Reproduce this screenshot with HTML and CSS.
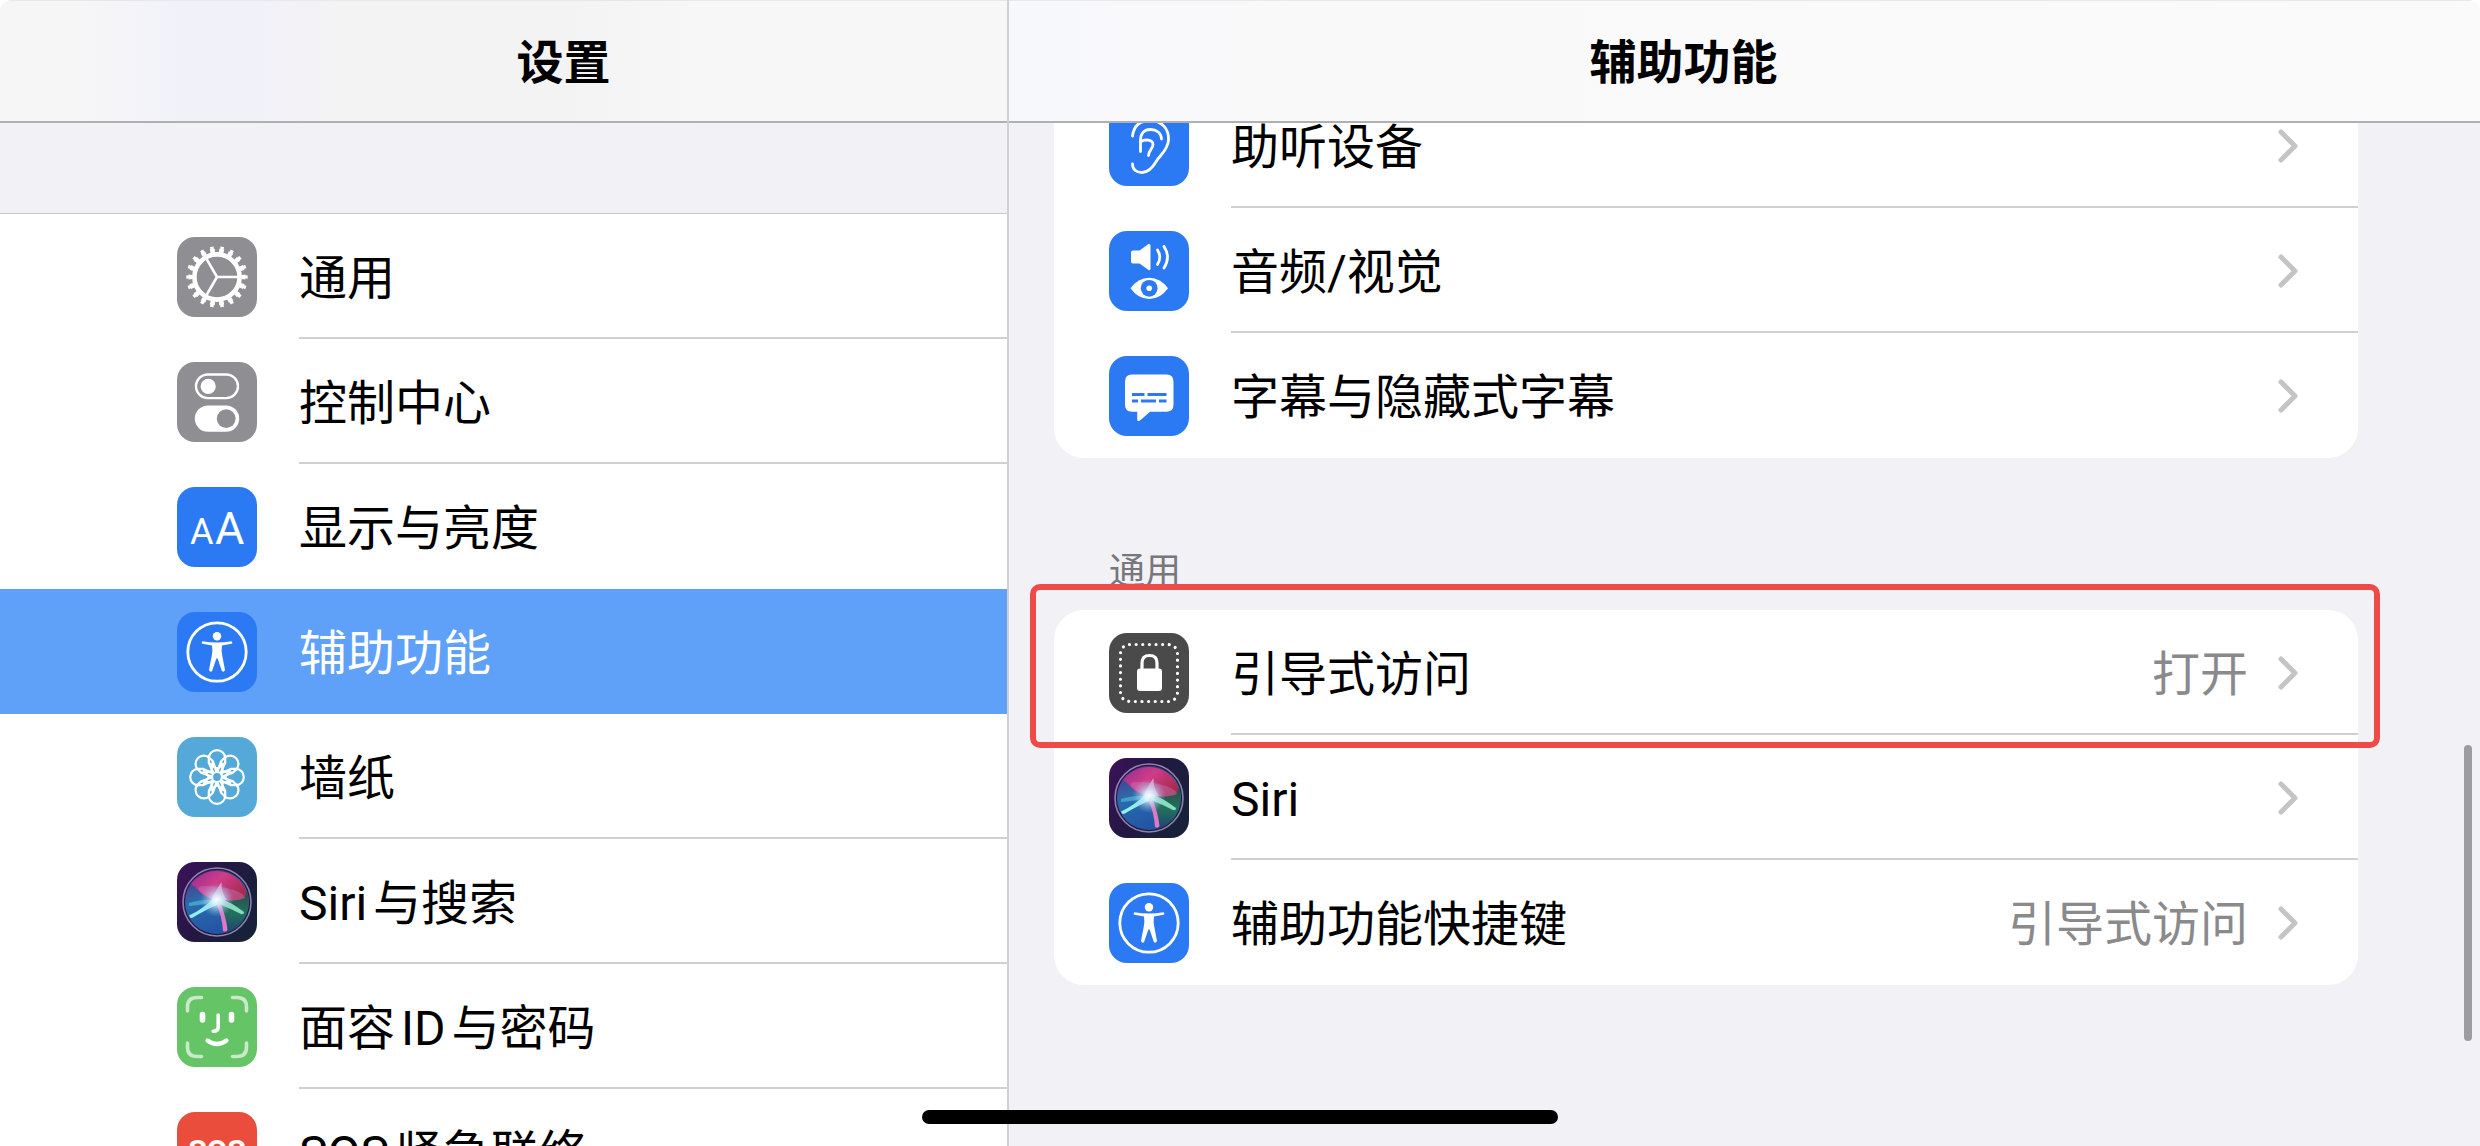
FILE: index.html
```
<!DOCTYPE html>
<html lang="zh-CN">
<head>
    <meta charset="UTF-8">
    <meta name="viewport" content="width=device-width, initial-scale=1.0">
    <title>设置</title>
    <link rel="stylesheet" href="styles.css">
</head>
<body>
    <!-- Icons that are used more than once -->
    <svg class="defs" aria-hidden="true">
        <defs>
            <linearGradient id="siriBg" x1="0" y1="0" x2="1" y2="0.5">
                <stop offset="0" stop-color="#3d125c"/>
                <stop offset="0.5" stop-color="#241743"/>
                <stop offset="1" stop-color="#17213a"/>
            </linearGradient>
            <linearGradient id="siriBlue" x1="0" y1="0" x2="0.3" y2="1">
                <stop offset="0" stop-color="#5a2580"/>
                <stop offset="0.5" stop-color="#2a6cab"/>
                <stop offset="1" stop-color="#2355a5"/>
            </linearGradient>
            <linearGradient id="siriGreen" x1="0" y1="0" x2="0" y2="1">
                <stop offset="0" stop-color="#2c4a4c"/>
                <stop offset="0.5" stop-color="#23705c"/>
                <stop offset="1" stop-color="#1f4373"/>
            </linearGradient>
            <linearGradient id="siriPink" x1="0" y1="0" x2="1" y2="0.6">
                <stop offset="0" stop-color="#8f2d92"/>
                <stop offset="0.5" stop-color="#cf3c88"/>
                <stop offset="1" stop-color="#a82b50"/>
            </linearGradient>
            <radialGradient id="siriGlow">
                <stop offset="0" stop-color="#ffffff"/>
                <stop offset="0.3" stop-color="#d9f4ff" stop-opacity="0.8"/>
                <stop offset="1" stop-color="#8fb4e8" stop-opacity="0"/>
            </radialGradient>
        </defs>
        <symbol id="icon-siri" viewBox="0 0 80 80">
            <rect width="80" height="80" fill="url(#siriBg)"/>
            <circle cx="40" cy="40" r="32" fill="url(#siriBlue)"/>
            <path d="M40 38L70 30A32 32 0 0 1 48 71Z" fill="url(#siriGreen)"/>
            <path d="M14 22A32 32 0 0 1 69 28Q70 35 64 37Q52 40 40 38Q28 36 22 29Q18 24 14 22Z" fill="url(#siriPink)"/>
            <path d="M22 28Q20 24 28 24Q44 24 57 28Q68 32 68 36Q60 40 40 38Q27 35 22 28Z" fill="#c98acb" opacity="0.35"/>
            <path d="M34 38Q39 28 44.500 20Q44 30 50 38Z" fill="#eebbe6" opacity="0.75"/>
            <path d="M12 41Q28 36 40 39Q28 43 12 44Z" fill="#54c4dc" opacity="0.6"/>
            <path d="M37 36Q26 47 12 53.500Q13 56.500 15 56Q30 47 42 42Z" fill="#8ff1ee"/>
            <path d="M42 36Q54 40 67 50Q67 53 64 52Q52 46 42 42Z" fill="#8febc8" opacity="0.9"/>
            <path d="M39 41Q45 54 46 69Q49 71 50.500 68Q49 54 43 40Z" fill="#df78c6"/>
            <circle cx="40" cy="38" r="17" fill="url(#siriGlow)"/>
            <circle cx="40" cy="40" r="34" fill="none" stroke="#b5a5cf" stroke-opacity="0.75" stroke-width="1.6"/>
        </symbol>
        <symbol id="icon-access" viewBox="0 0 80 80">
            <rect width="80" height="80" fill="#2b7af4"/>
            <circle cx="40" cy="40" r="29.2" fill="none" stroke="#fff" stroke-width="2.8"/>
            <circle cx="40" cy="24.3" r="4.2" fill="#fff"/>
            <path d="M25.4 29.2Q40 32 54.6 29.2Q56.2 31.4 54.4 31.8L45 33.6Q44 40 45.4 44.5L48 58Q46.6 61 44.8 58.8L40.6 46.5H39.4L35.2 58.8Q33.4 61 32 58L34.6 44.5Q36 40 35 33.6L25.6 31.8Q23.8 31.4 25.4 29.2Z" fill="#fff"/>
        </symbol>
        <symbol id="icon-chevron" viewBox="0 0 20 34">
            <path d="M3 3L17 17L3 31" fill="none" stroke="#c4c4c6" stroke-width="5" stroke-linecap="round" stroke-linejoin="round"/>
        </symbol>
    </svg>

    <div class="screen">
        <nav class="sidebar">
            <header class="bar bar-left"><h1>设置</h1></header>
            <ul class="list menu">
                <li>
                    <a class="row" href="#general">
                        <svg class="icon gray" viewBox="0 0 80 80" fill="none" stroke="#fff">
                            <circle cx="40" cy="40" r="22.6" stroke-width="4.6"/>
                            <circle cx="40" cy="40" r="26.4" stroke-width="4" pathLength="180" stroke-dasharray="5.2 4.8" stroke-dashoffset="2.6"/>
                            <circle cx="40" cy="40" r="29.2" stroke-width="3" pathLength="180" stroke-dasharray="3.4 6.6" stroke-dashoffset="1.7"/>
                            <path d="M40 40H61M40 40L29.5 21.8M40 40L29.5 58.2" stroke-width="2.6"/>
                        </svg>
                        <span class="label">通用</span>
                    </a>
                </li>
                <li>
                    <a class="row" href="#control">
                        <svg class="icon gray" viewBox="0 0 80 80">
                            <rect x="19" y="12.5" width="42" height="23.6" rx="11.8" fill="none" stroke="#fff" stroke-width="2.4"/>
                            <circle cx="31.2" cy="24.4" r="7.6" fill="#fff"/>
                            <rect x="17.8" y="43.4" width="44.4" height="26.4" rx="13.2" fill="#fff"/>
                            <circle cx="49.2" cy="56.6" r="9.4" fill="#8e8e93"/>
                        </svg>
                        <span class="label">控制中心</span>
                    </a>
                </li>
                <li>
                    <a class="row" href="#display">
                        <svg class="icon blue" viewBox="0 0 80 80">
                            <text x="13" y="57" font-size="36">A</text>
                            <text x="38" y="57" font-size="45">A</text>
                        </svg>
                        <span class="label">显示与亮度</span>
                    </a>
                </li>
                <li>
                    <a class="row active" href="#accessibility" aria-current="page">
                        <svg class="icon"><use href="#icon-access"/></svg>
                        <span class="label">辅助功能</span>
                    </a>
                </li>
                <li>
                    <a class="row" href="#wallpaper">
                        <svg class="icon cyan" viewBox="0 0 80 80" fill="none" stroke="#fff" stroke-width="2.2">
                            <defs>
                                <path id="petal" d="M36.6 36L31.8 26V21A8.2 7.8 0 0 1 48.2 21V26L43.4 36M31.8 26L40 32L48.2 26"/>
                            </defs>
                            <use href="#petal"/>
                            <use href="#petal" transform="rotate(45 40 40)"/>
                            <use href="#petal" transform="rotate(90 40 40)"/>
                            <use href="#petal" transform="rotate(135 40 40)"/>
                            <use href="#petal" transform="rotate(180 40 40)"/>
                            <use href="#petal" transform="rotate(225 40 40)"/>
                            <use href="#petal" transform="rotate(270 40 40)"/>
                            <use href="#petal" transform="rotate(315 40 40)"/>
                            <circle cx="40" cy="40" r="5"/>
                        </svg>
                        <span class="label">墙纸</span>
                    </a>
                </li>
                <li>
                    <a class="row" href="#siri-search">
                        <svg class="icon"><use href="#icon-siri"/></svg>
                        <span class="label">Siri与搜索</span>
                    </a>
                </li>
                <li>
                    <a class="row" href="#faceid">
                        <svg class="icon green" viewBox="0 0 80 80" fill="none" stroke="#fff" stroke-width="3.6" stroke-linecap="round">
                            <path d="M10.5 24V20Q10.5 10.5 20 10.5H24.5M55.5 10.5H60Q69.5 10.5 69.5 20V24M69.5 56V60Q69.5 69.5 60 69.5H55.5M24.5 69.5H20Q10.5 69.5 10.5 60V56" opacity="0.65"/>
                            <path d="M25.5 27.5V33M54.5 27.5V33" stroke-width="5.6"/>
                            <path d="M41.2 28V40Q41.2 44.2 36.2 44.2"/>
                            <path d="M30.5 53.5Q40 60.5 49.5 53.5" stroke-width="4.2"/>
                        </svg>
                        <span class="label">面容ID与密码</span>
                    </a>
                </li>
                <li>
                    <a class="row" href="#sos">
                        <svg class="icon red" viewBox="0 0 80 80">
                            <text x="40" y="49" font-size="30" font-weight="700" text-anchor="middle">SOS</text>
                        </svg>
                        <span class="label">SOS紧急联络</span>
                    </a>
                </li>
            </ul>
        </nav>

        <main class="detail">
            <header class="bar bar-right"><h1>辅助功能</h1></header>
            <div class="scroll">
                <ul class="list group group-hearing">
                    <li>
                        <a class="row" href="#hearing">
                            <svg class="icon blue" viewBox="0 0 80 80" fill="none" stroke="#fff" stroke-width="2.8" stroke-linecap="round" stroke-linejoin="round">
                                <path d="M23.5 30C25 19 32 14.5 41 14.5C53 14.5 60 23 59.5 34C59 44 51 49 47.5 55C44 61 40 66.5 33 66.5C27 66.5 23.5 63 23.5 58"/>
                                <path d="M52.5 33C52 27 47.5 23.5 41.5 23.5C35 23.5 31.5 28 31.5 34V45.5M32 35.5C36 33 44 33.5 44 38.5C44 43 39.5 44.5 39.5 49.5"/>
                            </svg>
                            <span class="label">助听设备</span>
                            <svg class="chevron"><use href="#icon-chevron"/></svg>
                        </a>
                    </li>
                    <li>
                        <a class="row" href="#audio-visual">
                            <svg class="icon blue" viewBox="0 0 80 80" fill="#fff">
                                <path d="M24 19.5H30.5L39.5 13Q41.5 12.500 41.5 14.5V38Q41.5 39.5 39.5 39L30.5 32.5H24Q22 32.5 22 30.5V21.5Q22 19.5 24 19.5Z"/>
                                <path d="M48.5 19Q53 26 48.5 33.5M55 15.500Q62 26 55 37" fill="none" stroke="#fff" stroke-width="2.8" stroke-linecap="round"/>
                                <path d="M21.500 57.3Q29 46.7 40.2 46.7Q51.5 46.7 59 57.3Q51.5 68 40.2 68Q29 68 21.5 57.3Z"/>
                                <circle cx="40.2" cy="57.3" r="8.4" fill="#2b7af4"/>
                                <circle cx="40.2" cy="57.3" r="2.8"/>
                            </svg>
                            <span class="label">音频/视觉</span>
                            <svg class="chevron"><use href="#icon-chevron"/></svg>
                        </a>
                    </li>
                    <li>
                        <a class="row" href="#subtitles">
                            <svg class="icon blue" viewBox="0 0 80 80">
                                <path d="M23 18.400H57.5Q64.5 18.4 64.5 25.4V48.8Q64.5 55.8 57.5 55.8H41L31 64.4Q28.2 66 28.2 63.4V55.8H23Q16 55.8 16 48.8V25.4Q16 18.4 23 18.4Z" fill="#fff"/>
                                <path d="M23 38.5H35.5M38.5 38.5H57.5M23 45H29M32 45H47M50 45H57.5" stroke="#2b7af4" stroke-width="3"/>
                            </svg>
                            <span class="label">字幕与隐藏式字幕</span>
                            <svg class="chevron"><use href="#icon-chevron"/></svg>
                        </a>
                    </li>
                </ul>

                <h2>通用</h2>
                <ul class="list group">
                    <li>
                        <a class="row highlight" href="#guided-access">
                            <svg class="icon dark" viewBox="0 0 80 80">
                                <rect x="11.5" y="11.5" width="57" height="57" rx="9" fill="none" stroke="#fff" stroke-width="3.2" stroke-linecap="round" pathLength="320" stroke-dasharray="0.01 9.99"/>
                                <path d="M33 37V30Q33 22.5 40.5 22.5Q48 22.5 48 30V37" fill="none" stroke="#fff" stroke-width="3.2"/>
                                <rect x="28" y="35.5" width="25" height="22.5" rx="3" fill="#fff"/>
                            </svg>
                            <span class="label">引导式访问</span>
                            <span class="value">打开</span>
                            <svg class="chevron"><use href="#icon-chevron"/></svg>
                        </a>
                    </li>
                    <li>
                        <a class="row" href="#siri">
                            <svg class="icon"><use href="#icon-siri"/></svg>
                            <span class="label">Siri</span>
                            <svg class="chevron"><use href="#icon-chevron"/></svg>
                        </a>
                    </li>
                    <li>
                        <a class="row" href="#shortcut">
                            <svg class="icon"><use href="#icon-access"/></svg>
                            <span class="label">辅助功能快捷键</span>
                            <span class="value">引导式访问</span>
                            <svg class="chevron"><use href="#icon-chevron"/></svg>
                        </a>
                    </li>
                </ul>
            </div>
            <div class="scrollbar"></div>
        </main>
        <div class="home-indicator"></div>
    </div>
</body>
</html>
```
FILE: styles.css
```
* {
    box-sizing: border-box;
}

body {
    margin: 0;
    background-color: #fff;
    color: #000;
    font-family: Roboto, "Noto Sans CJK SC", sans-serif;
    font-size: 48px;
    line-height: 60px;
    text-autospace: normal;
}

h1,
h2,
ul {
    margin: 0;
    padding: 0;
}

.defs {
    position: absolute;
    width: 0;
    height: 0;
}

.screen {
    position: relative;
    display: flex;
    height: 100vh;
    overflow: hidden;
    background-color: #f2f1f6;
    border-radius: 12px 12px 0 0;
}

/* Title bars */
.bar {
    position: relative;
    z-index: 1;
    flex: none;
    height: 123px;
    display: flex;
    align-items: center;
    justify-content: center;
    padding-top: 4px;
    border-top: 1px solid #e8e8e8;
    border-bottom: 2px solid #b0b0b3;
}

.bar h1 {
    font-size: 47px;
    font-weight: 600;
}

.bar-left {
    padding-left: 120px;
    background: linear-gradient(90deg, #f6f6f7 8%, #f1f1fa 18%, #f1f1fa 25%, #f3f3f3 34%, #f3f3f3 56%, #f7f7f7 70%);
}

.bar-right {
    padding-right: 122px;
    background: linear-gradient(90deg, #f7f8fc, #f9f9f9 20%, #fafafb);
}

/* Columns */
.sidebar {
    flex: 0 0 1009px;
    display: flex;
    flex-direction: column;
    border-right: 2px solid #d0d0d4;
}

.detail {
    position: relative;
    flex: 1;
    min-width: 0;
    display: flex;
    flex-direction: column;
}

.scroll {
    padding: 0 122px 0 45px;
}

/* Rows */
.list {
    list-style: none;
    background-color: #fff;
}

.menu {
    flex: none;
    margin-top: 91px;
    box-shadow: 0 -1px 0 #c8c8cc;
}

.row {
    position: relative;
    display: flex;
    align-items: center;
    gap: 42px;
    height: 125px;
    padding-left: 55px;
    color: inherit;
    text-decoration: none;
}

.menu .row {
    padding-left: 177px;
}

.row::after {
    content: "";
    position: absolute;
    left: 177px;
    right: 0;
    bottom: 0;
    height: 2px;
    background-color: #d0d0d2;
}

.menu .row::after {
    left: 299px;
}

.group li:last-child .row::after,
.menu li:has(+ li .active) .row::after,
.menu .active::after {
    display: none;
}

.row.active {
    background-color: #5fa1f8;
    color: #fff;
}

.label,
.value {
    padding-top: 5px;
    white-space: nowrap;
}

.label {
    flex: 1;
}

.value {
    margin-right: -12px;
    color: #8a8a8c;
}

.icon {
    flex: none;
    width: 80px;
    height: 80px;
    border-radius: 18px;
}

.icon text {
    fill: #fff;
}

.gray {
    background-color: #8e8e93;
}

.blue {
    background-color: #2b7af4;
}

.cyan {
    background-color: #54a9d8;
}

.green {
    background-color: #65c466;
}

.red {
    background-color: #eb4d3d;
}

.dark {
    background-color: #4a4a4a;
}

.chevron {
    flex: none;
    width: 20px;
    height: 34px;
    margin-right: 60px;
}

/* Detail groups */
.group {
    border-radius: 30px;
}

/* already scrolled, so the first row sits partly under the title bar */
.group-hearing {
    margin-top: -40px;
}

.detail h2 {
    margin: 92px 0 15px;
    padding-left: 55px;
    color: #77777c;
    font-size: 36px;
    font-weight: 400;
    line-height: 45px;
}

.highlight::before {
    content: "";
    position: absolute;
    z-index: 1;
    inset: -26px -22px -13px -24px;
    border: 6px solid #ee4a48;
    border-radius: 10px;
}

.scrollbar {
    position: absolute;
    right: 8px;
    bottom: 105px;
    width: 8px;
    height: 296px;
    border-radius: 4px;
    background-color: #9d9da1;
}

.home-indicator {
    position: absolute;
    z-index: 2;
    left: 50%;
    bottom: 22px;
    width: 636px;
    height: 14px;
    margin-left: -318px;
    border-radius: 7px;
    background-color: #000;
}
```
